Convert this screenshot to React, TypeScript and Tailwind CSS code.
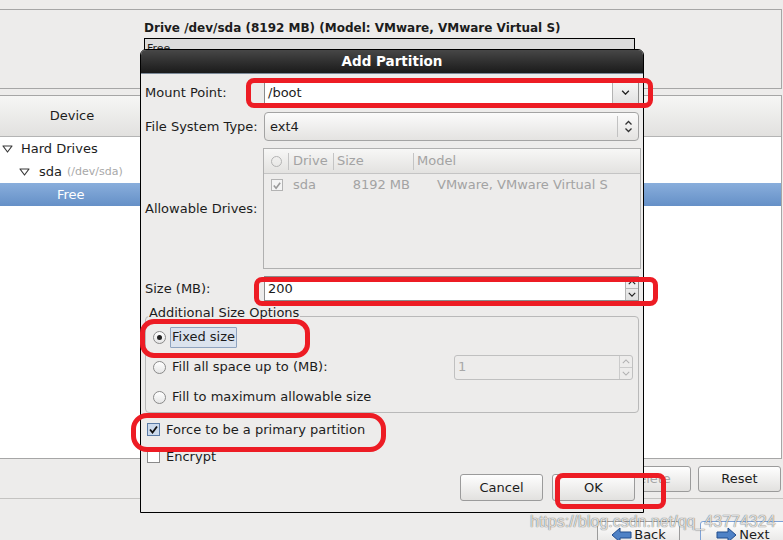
import React from "react";

const btn =
  "flex items-center justify-center rounded-[3px] border border-[#9b9b9b] bg-linear-to-b from-[#fefefe] to-[#e2e1df]";

function TreeTriangle() {
  return (
    <svg width="11" height="8" viewBox="0 0 11 8">
      <path d="M1 1 L10 1 L5.5 7 Z" fill="none" stroke="#3a3a3a" strokeWidth="1.2" strokeLinejoin="round" />
    </svg>
  );
}

function ChevronDown({ color = "#222", w = 10, h = 6, sw = 1.8 }: { color?: string; w?: number; h?: number; sw?: number }) {
  return (
    <svg width={w} height={h} viewBox="0 0 10 6">
      <path d="M1 1 L5 5 L9 1" fill="none" stroke={color} strokeWidth={sw} />
    </svg>
  );
}

function ChevronUp({ color = "#222", w = 10, h = 6, sw = 1.8 }: { color?: string; w?: number; h?: number; sw?: number }) {
  return (
    <svg width={w} height={h} viewBox="0 0 10 6">
      <path d="M1 5 L5 1 L9 5" fill="none" stroke={color} strokeWidth={sw} />
    </svg>
  );
}

function DoubleChevron() {
  return (
    <svg width="9" height="15" viewBox="0 0 9 15">
      <path d="M1.5 5.5 L4.5 2.5 L7.5 5.5" fill="none" stroke="#333" strokeWidth="1.3" />
      <path d="M1.5 9.5 L4.5 12.5 L7.5 9.5" fill="none" stroke="#333" strokeWidth="1.3" />
    </svg>
  );
}

function Radio({ checked }: { checked?: boolean }) {
  return (
    <div className="w-[13px] h-[13px] shrink-0 rounded-full border border-[#8a8a8a] bg-linear-to-b from-white to-[#e6e6e6] flex items-center justify-center">
      {checked && <div className="w-[5px] h-[5px] rounded-full bg-[#222]" />}
    </div>
  );
}

function Check({ color }: { color: string }) {
  return (
    <svg width="11" height="11" viewBox="0 0 11 11">
      <path d="M2 5.5 L4.5 8.5 L9 2.5" fill="none" stroke={color} strokeWidth="1.8" />
    </svg>
  );
}

function ArrowLeft() {
  return (
    <svg width="21" height="16" viewBox="0 0 21 16">
      <polygon points="1,8 9,1 9,5 20,5 20,11 9,11 9,15" fill="#4f82c6" stroke="#204c8c" strokeWidth="1" strokeLinejoin="round" />
    </svg>
  );
}

function ArrowRight() {
  return (
    <svg width="21" height="16" viewBox="0 0 21 16">
      <polygon points="20,8 12,1 12,5 1,5 1,11 12,11 12,15" fill="#4f82c6" stroke="#204c8c" strokeWidth="1" strokeLinejoin="round" />
    </svg>
  );
}

export default function App() {
  return (
    <div className="relative w-[783px] h-[540px] overflow-hidden bg-[#edeceb] text-[13px] leading-[16px] text-[#1c1c1c] font-['DejaVu_Sans',sans-serif]">
      {/* Background window */}
      <div className="h-[9px]" />
      <div className="w-[782px] h-[80px] border-t border-r border-b border-[#a6a6a6] pl-[144px] pt-[11px]">
        <div className="font-bold whitespace-nowrap text-[12px] leading-[15px]">Drive /dev/sda (8192 MB) (Model: VMware, VMware Virtual S)</div>
        <div className="mt-[2px] w-[491px] h-[36px] border border-black bg-[#dcdcdc] pl-[2px] pt-[3px] text-[11px] leading-[14px]">Free</div>
      </div>

      <div className="mt-[6px] w-[782px] border-t border-r border-b border-[#a6a6a6]">
        <div className="h-[41px] border-b border-[#b4b4b4] bg-linear-to-b from-[#f6f6f5] to-[#e2e1df] flex">
          <div className="w-[144px] flex items-center justify-center">Device</div>
        </div>
        <div className="h-[321px] bg-white">
          <div className="h-[23px] flex items-center pl-[2px]">
            <TreeTriangle />
            <span className="ml-[8px]">Hard Drives</span>
          </div>
          <div className="h-[23px] flex items-center pl-[19px]">
            <TreeTriangle />
            <span className="ml-[9px]">sda</span>
            <span className="ml-[5px] text-[11px] text-[#a8a8a8]">(/dev/sda)</span>
          </div>
          <div className="h-[23px] flex items-center pl-[57px] text-white bg-linear-to-b from-[#89aedc] to-[#6590c7]">Free</div>
        </div>
      </div>

      <div className="mt-[7px] w-[781px] flex justify-end gap-[7px]">
        <div className={btn + " w-[83px] h-[26px] text-[#a5a5a5]"}>Delete</div>
        <div className={btn + " w-[83px] h-[26px]"}>Reset</div>
      </div>
      <div className="mt-[6px] border-t border-[#c4c3c1]" />
      <div className="mt-[22px] pl-[597px] flex gap-[20px]">
        <div className={btn + " w-[83px] h-[28px] gap-[2px] shrink-0"}>
          <ArrowLeft />
          <span>Back</span>
        </div>
        <div className="flex items-center justify-center rounded-[3px] border border-[#7ea2d6] bg-linear-to-b from-[#fefefe] to-[#e2e1df] w-[86px] h-[28px] gap-[2px] shrink-0">
          <ArrowRight />
          <span>Next</span>
        </div>
      </div>

      {/* Dialog */}
      <div className="absolute left-[140px] top-[49px] w-[504px] h-[464px] border border-black rounded-t-[6px] bg-[#edeceb] overflow-hidden">
        <div className="h-[24px] border-b border-[#7d8a99] bg-linear-to-b from-[#474747] to-[#1b1b1b] text-white font-bold text-center text-[13.5px] leading-[23px]">
          Add Partition
        </div>
        <div className="px-[4px] pt-[6px]">
          {/* Mount point */}
          <div className="flex h-[25px]">
            <div className="w-[119px] flex items-center">Mount Point:</div>
            <div className="flex-1 flex border border-[#8c8c8c] bg-white">
              <div className="flex-1 flex items-center pl-[3px]">/boot</div>
              <div className="w-[26px] border-l border-[#b3b3b3] bg-linear-to-b from-[#f8f8f8] to-[#e1e1e1] flex items-center justify-center">
                <ChevronDown w={9} h={5} sw={1.6} />
              </div>
            </div>
          </div>

          {/* File system type */}
          <div className="flex h-[29px] mt-[7px]">
            <div className="w-[119px] flex items-center">File System Type:</div>
            <div className="flex-1 flex items-center rounded-[4px] border border-[#a3a3a3] bg-linear-to-b from-[#fbfbfb] to-[#e4e3e1]">
              <div className="flex-1 pl-[5px]">ext4</div>
              <div className="w-px h-[21px] bg-[#c2c2c2]" />
              <div className="w-[20px] flex items-center justify-center">
                <DoubleChevron />
              </div>
            </div>
          </div>

          {/* Allowable drives */}
          <div className="flex h-[121px] mt-[7px]">
            <div className="w-[118px] flex items-center">Allowable Drives:</div>
            <div className="flex-1 -mr-[2px] border border-[#b0b0b0] text-[#a3a3a3]">
              <div className="h-[25px] border-b border-[#c4c4c4] bg-linear-to-b from-[#f7f7f6] to-[#e3e2e0] flex items-center">
                <div className="w-[24px] pl-[7px] flex items-center">
                  <div className="w-[11px] h-[11px] rounded-full border border-[#b3b3b3]" />
                </div>
                <div className="w-px h-[17px] bg-[#c4c4c4]" />
                <div className="w-[44px] pl-[4px]">Drive</div>
                <div className="w-px h-[17px] bg-[#c4c4c4]" />
                <div className="w-[79px] pl-[3px]">Size</div>
                <div className="w-px h-[17px] bg-[#c4c4c4]" />
                <div className="pl-[3px]">Model</div>
              </div>
              <div className="h-[22px] flex items-center">
                <div className="w-[25px] pl-[7px] flex items-center">
                  <div className="w-[12px] h-[12px] border border-[#b3b3b3] bg-[#f4f4f4] flex items-center justify-center">
                    <Check color="#9a9a9a" />
                  </div>
                </div>
                <div className="w-[45px] pl-[4px]">sda</div>
                <div className="w-[76px] text-right">8192 MB</div>
                <div className="pl-[27px] whitespace-nowrap">VMware, VMware Virtual S</div>
              </div>
            </div>
          </div>

          {/* Size */}
          <div className="flex h-[25px] mt-[7px]">
            <div className="w-[119px] flex items-center">Size (MB):</div>
            <div className="flex-1 flex border border-[#8c8c8c] bg-white">
              <div className="flex-1 flex items-center pl-[3px]">200</div>
              <div className="w-[13px] border-l border-[#b3b3b3] flex flex-col bg-linear-to-b from-[#f6f6f6] to-[#e0e0e0]">
                <div className="flex-1 flex items-center justify-center border-b border-[#b9b9b9]">
                  <ChevronUp w={8} h={5} sw={1.5} />
                </div>
                <div className="flex-1 flex items-center justify-center">
                  <ChevronDown w={8} h={5} sw={1.5} />
                </div>
              </div>
            </div>
          </div>

          {/* Additional size options */}
          <div className="relative mt-[15px] h-[97px] rounded-[4px] border border-[#b9b9b9] pt-[5px]">
            <div className="absolute top-[-12px] left-[2px] px-[1px] bg-[#edeceb]">Additional Size Options</div>
            <div className="h-[30px] flex items-center pl-[7px]">
              <Radio checked />
              <div className="ml-[4px] h-[21px] flex items-center px-[1px] border border-[#8fa3bf] bg-[#dbe3ee] rounded-[1px]">Fixed size</div>
            </div>
            <div className="h-[30px] flex items-center pl-[7px]">
              <Radio />
              <div className="ml-[4px] px-[1px] border border-transparent">Fill all space up to (MB):</div>
              <div className="ml-auto mr-[5px] w-[179px] h-[25px] flex rounded-[3px] border border-[#c0c0c0] text-[#a8a8a8]">
                <div className="flex-1 flex items-center pl-[3px]">1</div>
                <div className="w-[13px] border-l border-[#cbcbcb] flex flex-col">
                  <div className="flex-1 flex items-center justify-center border-b border-[#cbcbcb]">
                    <ChevronUp color="#b0b0b0" w={8} h={5} sw={1.3} />
                  </div>
                  <div className="flex-1 flex items-center justify-center">
                    <ChevronDown color="#b0b0b0" w={8} h={5} sw={1.3} />
                  </div>
                </div>
              </div>
            </div>
            <div className="h-[30px] flex items-center pl-[7px]">
              <Radio />
              <div className="ml-[4px] px-[1px] border border-transparent">Fill to maximum allowable size</div>
            </div>
          </div>

          {/* Checkboxes */}
          <div className="mt-[3px] h-[27px] flex items-center pl-[2px]">
            <div className="w-[13px] h-[13px] border border-[#5b7ba6] bg-[#ccdaec] flex items-center justify-center">
              <Check color="#111" />
            </div>
            <span className="ml-[6px]">Force to be a primary partition</span>
          </div>
          <div className="h-[27px] flex items-center pl-[2px]">
            <div className="w-[13px] h-[13px] border border-[#8a8a8a] bg-white" />
            <span className="ml-[6px]">Encrypt</span>
          </div>

          {/* Buttons */}
          <div className="mt-[4px] flex justify-end gap-[9px] pr-[4px]">
            <div className={btn + " w-[83px] h-[27px]"}>Cancel</div>
            <div className={btn + " w-[83px] h-[27px]"}>OK</div>
          </div>
        </div>
      </div>

      {/* Red annotations */}
      <div className="absolute left-[246px] top-[78px] w-[407px] h-[30px] rounded-[8px] border-[5px] border-[#ed1c24]" />
      <div className="absolute left-[254px] top-[277px] w-[404px] h-[29px] rounded-[8px] border-[5px] border-[#ed1c24]" />
      <div className="absolute left-[140px] top-[319px] w-[170px] h-[39px] rounded-[14px] border-[5px] border-[#ed1c24]" />
      <div className="absolute left-[131px] top-[413px] w-[255px] h-[39px] rounded-[16px] border-[5px] border-[#ed1c24]" />
      <div className="absolute left-[555px] top-[473px] w-[111px] h-[36px] rounded-[8px] border-[5px] border-[#ed1c24]" />

      {/* Watermark */}
      <div className="absolute left-[530px] top-[512px] text-[16px] leading-[20px] whitespace-nowrap font-['Liberation_Sans',sans-serif] text-[rgba(255,255,255,0.8)] [text-shadow:0_0_1px_rgba(0,0,0,0.45),0_0_1px_rgba(0,0,0,0.45)]">
        https://blog.csdn.net/qq_43774324
      </div>
    </div>
  );
}
